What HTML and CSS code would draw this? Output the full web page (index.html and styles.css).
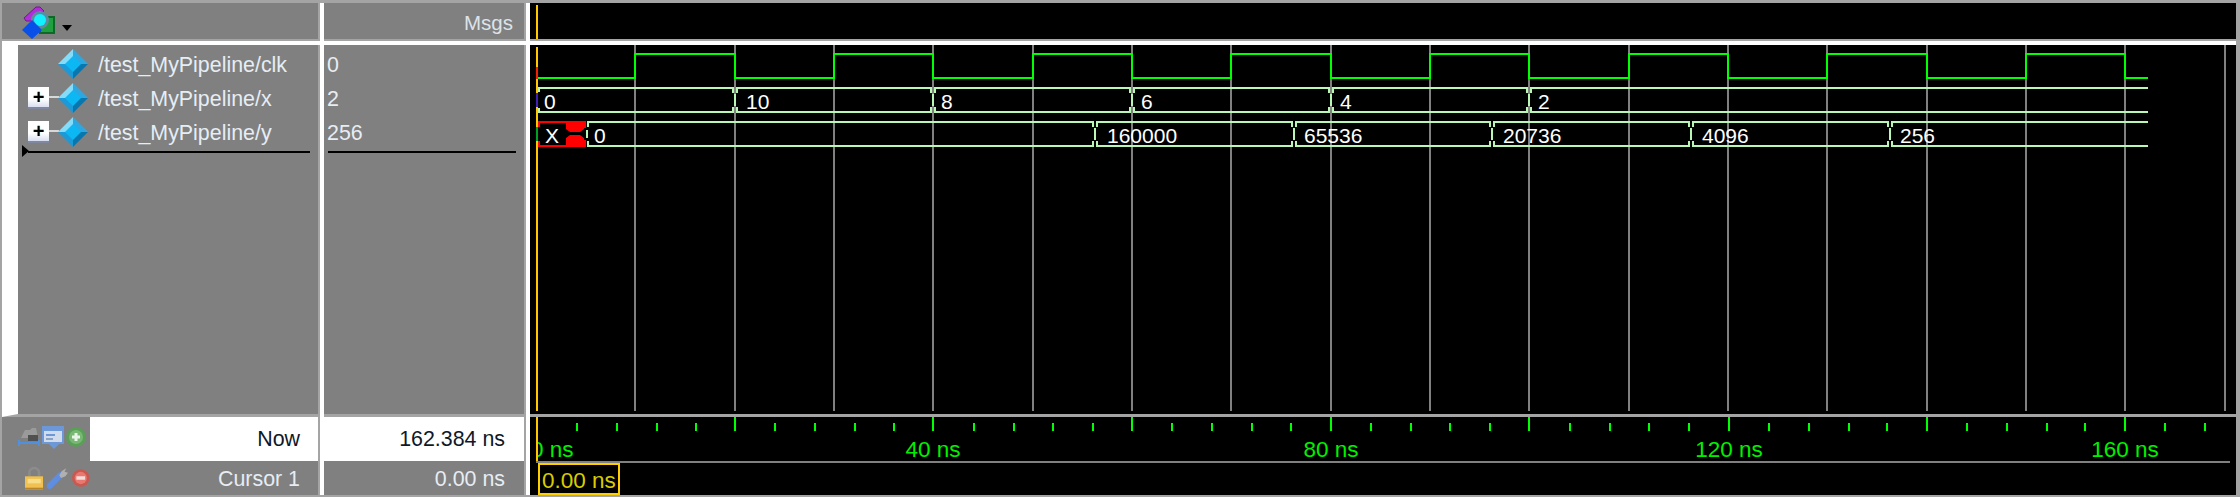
FILE: index.html
```html
<!DOCTYPE html>
<html lang="en">

<head>
    <meta charset="UTF-8">
    <title>Wave</title>
    <link rel="stylesheet" href="styles.css">
</head>

<body>
    <svg class="defs" width="0" height="0">
        <symbol id="diamond" viewBox="0 0 30 30">
            <polygon points="0,15 15,0 15,15" fill="#86dcf8"/>
            <polygon points="15,0 30,15 15,15" fill="#2aa8e4"/>
            <polygon points="0,15 15,30 15,15" fill="#1a9ad8"/>
            <polygon points="30,15 15,30 15,15" fill="#0a76ae"/>
            <polygon points="15,7 23,15 15,23 7,15" fill="#0cb8f4"/>
        </symbol>
        <symbol id="edge" viewBox="-4 -13 8 26" overflow="visible">
            <path d="M-2 -13V-7M2 -13V-7M-2 13V7M2 13V7M0 -6V6" fill="none" stroke="#b8f8b4" stroke-width="2"/>
        </symbol>
    </svg>

    <div class="app">
        <!-- top row -->
        <div class="head names-head">
            <svg class="logo" width="34" height="36" viewBox="0 0 34 36">
                <path d="M2 15L14 4H18L22 8L10 18H4Z" fill="#b030d8" stroke="#701890"/>
                <rect x="18" y="14" width="14" height="16" fill="#20a040" stroke="#106828" stroke-width="2"/>
                <circle cx="18" cy="17" r="9" fill="#5c8ca0"/>
                <circle cx="18" cy="17" r="6" fill="#10f0ff"/>
                <polygon points="10,17 20,27 10,36 0,27" fill="#0850e8"/>
            </svg>
            <span class="caret"></span>
        </div>
        <div class="head msgs-head">Msgs</div>
        <div class="head wave-head"><div class="cursor-mark"></div></div>

        <!-- signals -->
        <div class="pane names">
            <div class="sig">
                <span class="slot"></span>
                <svg class="dia" width="30" height="30"><use href="#diamond"/></svg>
                <span class="sig-name">/test_MyPipeline/clk</span>
            </div>
            <div class="sig">
                <span class="slot"><span class="plus"></span></span>
                <svg class="dia" width="30" height="30"><use href="#diamond"/></svg>
                <span class="sig-name">/test_MyPipeline/x</span>
            </div>
            <div class="sig">
                <span class="slot"><span class="plus"></span></span>
                <svg class="dia" width="30" height="30"><use href="#diamond"/></svg>
                <span class="sig-name">/test_MyPipeline/y</span>
            </div>
            <div class="endline"><span class="marker"></span></div>
        </div>
        <div class="pane values">
            <div class="val">0</div>
            <div class="val">2</div>
            <div class="val">256</div>
            <div class="endline"></div>
        </div>
        <div class="pane waves">
            <svg class="wave-svg" width="1706" height="366" viewBox="530 45 1706 366">
                <path class="grid" d="M635 45V411M735 45V411M834 45V411M933 45V411M1033 45V411M1132 45V411M1231 45V411M1331 45V411M1430 45V411M1529 45V411M1629 45V411M1728 45V411M1827 45V411M1927 45V411M2026 45V411M2125 45V411M2225 45V411"/>

                <rect x="536" y="47" width="2" height="364" fill="#ffc800"/>
                <rect x="536" y="67" width="2" height="12" fill="#f02000"/>
                <rect x="536" y="93" width="2" height="14" fill="#4020b0"/>
                <rect x="536" y="127" width="2" height="14" fill="#00a020"/>

                <path class="clk" d="M538 78H635V54H735V78H834V54H933V78H1033V54H1132V78H1231V54H1331V78H1430V54H1529V78H1629V54H1728V78H1827V54H1927V78H2026V54H2125V78H2148"/>

                <path class="bus" d="M539 92V88H733M737 88H931M935 88H1130M1134 88H1329M1333 88H1527M1531 88H2148M539 108V112H733M737 112H931M935 112H1130M1134 112H1329M1333 112H1527M1531 112H2148"/>
                <use href="#edge" x="731" y="87" width="8" height="26"/>
                <use href="#edge" x="929" y="87" width="8" height="26"/>
                <use href="#edge" x="1128" y="87" width="8" height="26"/>
                <use href="#edge" x="1327" y="87" width="8" height="26"/>
                <use href="#edge" x="1525" y="87" width="8" height="26"/>

                <path class="unknown" d="M538 122H585V128M538 146H585V140M539 122V127M539 146V141"/>
                <path d="M566 121H584V129L580 132H570L566 129ZM570 135H580L584 138V147H566V138Z" fill="#ff0000"/>

                <path class="bus" d="M588 127V122H1093M1097 122H1292M1296 122H1490M1494 122H1689M1693 122H1888M1892 122H2148M588 141V146H1093M1097 146H1292M1296 146H1490M1494 146H1689M1693 146H1888M1892 146H2148M587 130V138"/>
                <use href="#edge" x="1091" y="121" width="8" height="26"/>
                <use href="#edge" x="1290" y="121" width="8" height="26"/>
                <use href="#edge" x="1488" y="121" width="8" height="26"/>
                <use href="#edge" x="1687" y="121" width="8" height="26"/>
                <use href="#edge" x="1886" y="121" width="8" height="26"/>

                <text x="544" y="109">0</text>
                <text x="746" y="109">10</text>
                <text x="941" y="109">8</text>
                <text x="1141" y="109">6</text>
                <text x="1340" y="109">4</text>
                <text x="1538" y="109">2</text>
                <text x="545" y="143">X</text>
                <text x="594" y="143">0</text>
                <text x="1107" y="143">160000</text>
                <text x="1304" y="143">65536</text>
                <text x="1503" y="143">20736</text>
                <text x="1702" y="143">4096</text>
                <text x="1900" y="143">256</text>
            </svg>
        </div>

        <!-- now row -->
        <div class="now-name">
            <div class="tools">
                <svg width="22" height="20" viewBox="0 0 22 20">
                    <path d="M3 11L7 3H12L14 1H18L20 11Z" fill="#9a9a9a"/>
                    <rect x="10" y="8" width="10" height="6" fill="#505050"/>
                    <path d="M1 16H21M1 13V19M21 13V19" fill="none" stroke="#5090e0" stroke-width="2"/>
                </svg>
                <svg width="22" height="23" viewBox="0 0 22 23">
                    <rect x="0" y="0" width="22" height="18" fill="#6c98d8"/>
                    <rect x="2" y="5" width="18" height="11" fill="#d0dcec"/>
                    <rect x="4" y="8" width="9" height="2" fill="#6c98d8"/>
                    <rect x="4" y="12" width="7" height="2" fill="#8aa4c8"/>
                    <polygon points="7,18 17,18 12,23" fill="#6c98d8"/>
                </svg>
                <svg width="20" height="20" viewBox="0 0 20 20">
                    <circle cx="10" cy="10" r="10" fill="#5a9e58"/>
                    <circle cx="10" cy="10" r="7" fill="#78b874"/>
                    <path d="M10 6V14M6 10H14" stroke="#e8f4e8" stroke-width="3"/>
                </svg>
            </div>
            <div class="now-label">Now</div>
        </div>
        <div class="now-val">162.384 ns</div>

        <div class="wave-foot">
            <svg class="wave-svg" width="1706" height="78" viewBox="530 417 1706 78">
                <path class="tick" d="M735 417V431M933 417V431M1132 417V431M1331 417V431M1529 417V431M1729 417V431M1927 417V431M2125 417V431"/>
                <path class="tick" d="M577 423V431M617 423V431M657 423V431M696 423V431M775 423V431M815 423V431M855 423V431M894 423V431M974 423V431M1014 423V431M1053 423V431M1093 423V431M1172 423V431M1212 423V431M1252 423V431M1291 423V431M1371 423V431M1411 423V431M1450 423V431M1490 423V431M1570 423V431M1610 423V431M1649 423V431M1689 423V431M1769 423V431M1809 423V431M1849 423V431M1887 423V431M1967 423V431M2007 423V431M2047 423V431M2085 423V431M2165 423V431M2205 423V431"/>
                <text class="ruler" x="531" y="457">0 ns</text>
                <rect x="530" y="440" width="6" height="20" fill="black"/>
                <text class="ruler mid" x="933" y="457">40 ns</text>
                <text class="ruler mid" x="1331" y="457">80 ns</text>
                <text class="ruler mid" x="1729" y="457">120 ns</text>
                <text class="ruler mid" x="2125" y="457">160 ns</text>
                <rect x="536" y="417" width="2" height="44" fill="#ffc800"/>
                <rect x="536" y="461" width="1694" height="2" fill="#808080"/>
                <rect x="539" y="464" width="80" height="30" class="curbox"/>
                <text class="curtxt" x="542" y="488">0.00 ns</text>
            </svg>
        </div>

        <!-- cursor row -->
        <div class="cur-name">
            <div class="tools tools-cur">
                <svg width="21" height="25" viewBox="0 0 21 25">
                    <path d="M5 10V6A5 5 0 0 1 16 6V10" fill="none" stroke="#8c8c8c" stroke-width="3"/>
                    <rect x="0" y="10" width="21" height="15" fill="#f0c050"/>
                    <rect x="3" y="13" width="15" height="5" fill="#f8dc88"/>
                    <rect x="0" y="23" width="21" height="2" fill="#b88428"/>
                </svg>
                <svg width="24" height="24" viewBox="0 0 24 24">
                    <path d="M3 21L15 9" stroke="#5f8ee0" stroke-width="7" stroke-linecap="round"/>
                    <path d="M14 9L17 4L22 1L20 5L24 6L21 10L16 12Z" fill="#b0b0b0"/>
                </svg>
                <svg width="20" height="20" viewBox="0 0 20 20">
                    <circle cx="10" cy="10" r="10" fill="#c85850"/>
                    <circle cx="10" cy="10" r="7" fill="#e87870"/>
                    <rect x="5" y="8" width="10" height="4" fill="#f4dcd8"/>
                </svg>
            </div>
            <div class="cur-label">Cursor 1</div>
        </div>
        <div class="cur-val">0.00 ns</div>
    </div>
</body>

</html>
```

FILE: styles.css
```css
html, body {
    margin: 0;
    padding: 0;
}

body {
    width: 2240px;
    height: 497px;
    overflow: hidden;
    font-family: "Liberation Sans", Arial, sans-serif;
    font-size: 21.4px;
}

.defs {
    position: absolute;
}

.app {
    box-sizing: border-box;
    width: 2240px;
    height: 497px;
    display: grid;
    grid-template-columns: 318px 202px 1706px;
    grid-template-rows: 42px 372px 44px 34px;
    column-gap: 4px;
    background-color: white;
    border-top: 3px solid #a4a4a4;
    border-left: 2px solid #a4a4a4;
    border-right: 4px solid #a4a4a4;
    border-bottom: 2px solid #a4a4a4;
}

.head {
    height: 36px;
    background-color: #808080;
    border-bottom: 2px solid #a4a4a4;
}

.names-head {
    display: flex;
    align-items: flex-start;
    border-right: 2px solid #a4a4a4;
}

.logo {
    margin-left: 20px;
}

.caret {
    width: 0;
    height: 0;
    margin-left: 6px;
    margin-top: 22px;
    border-left: 5px solid transparent;
    border-right: 5px solid transparent;
    border-top: 6px solid black;
}

.msgs-head {
    text-align: right;
    padding-right: 11px;
    line-height: 40px;
    font-size: 20.5px;
    color: #dde3e8;
    border-right: 2px solid #a4a4a4;
}

.wave-head {
    background-color: black;
    padding-top: 2px;
    height: 34px;
}

.cursor-mark {
    width: 2px;
    height: 34px;
    margin-left: 6px;
    background-color: #ffc800;
}

.pane {
    height: 369px;
    border-bottom: 3px solid #a4a4a4;
}

.names {
    background-color: #808080;
    border-left: 16px solid white;
    border-right: 2px solid #a4a4a4;
    padding-top: 2px;
    height: 367px;
}

.values {
    background-color: #808080;
    border-right: 2px solid #a4a4a4;
    padding-top: 2px;
    height: 367px;
}

.waves {
    background-color: black;
}

.wave-svg {
    display: block;
    overflow: hidden;
}

.sig {
    display: flex;
    align-items: center;
    height: 34px;
    padding-left: 10px;
}

.slot {
    display: flex;
    align-items: center;
    width: 30px;
    height: 34px;
}

.plus {
    position: relative;
    width: 21px;
    height: 20px;
    background: linear-gradient(#ffffff 60%, #d8def0);
    border-bottom: 2px solid #8088a0;
}

/* plus sign and the little line to the diamond */
.plus::before {
    content: "+";
    position: absolute;
    left: 0;
    width: 21px;
    top: -1px;
    text-align: center;
    font-size: 20px;
    font-weight: bold;
    line-height: 22px;
    color: black;
}

.plus::after {
    content: "";
    position: absolute;
    left: 21px;
    top: 9px;
    width: 10px;
    height: 2px;
    background-color: #d8d8d8;
}

.dia {
    display: block;
    position: relative;
}

.sig-name {
    margin-left: 10px;
    padding-top: 3px;
    color: #e6edf4;
    white-space: nowrap;
}

.endline {
    position: relative;
    height: 2px;
    margin: 2px 8px 0 10px;
    background-color: black;
}

.values .endline {
    margin: 2px 8px 0 4px;
}

.marker {
    position: absolute;
    left: -6px;
    top: -6px;
    width: 0;
    height: 0;
    border-top: 6px solid transparent;
    border-bottom: 6px solid transparent;
    border-left: 7px solid black;
}

.val {
    height: 34px;
    line-height: 37px;
    padding-left: 3px;
    color: #e6edf4;
}

.grid {
    fill: none;
    stroke: #808080;
    stroke-width: 2;
}

.clk {
    fill: none;
    stroke: #00ff00;
    stroke-width: 2;
}

.bus {
    fill: none;
    stroke: #b8f8b4;
    stroke-width: 2;
}

.unknown {
    fill: none;
    stroke: #ff0000;
    stroke-width: 2;
}

.wave-svg text {
    font-family: "Liberation Sans", Arial, sans-serif;
    font-size: 21px;
    fill: white;
}

.wave-svg .ruler {
    fill: #00f000;
    font-size: 22.5px;
}

.wave-svg .mid {
    text-anchor: middle;
}

.wave-svg .curtxt {
    fill: #d8cc00;
    font-size: 22.5px;
}

.tick {
    fill: none;
    stroke: #00ff00;
    stroke-width: 2;
}

.curbox {
    fill: none;
    stroke: #ffd000;
    stroke-width: 2;
}

.now-name {
    display: flex;
    background-color: white;
    height: 44px;
    border-right: 2px solid #a4a4a4;
}

.tools {
    display: flex;
    align-items: center;
    gap: 2px;
    box-sizing: border-box;
    width: 88px;
    padding-left: 16px;
    padding-bottom: 4px;
    background-color: #808080;
    filter: blur(0.6px);
}

.tools-cur {
    padding-left: 23px;
    padding-bottom: 0;
    gap: 4px;
    background-color: transparent;
}

.now-label {
    flex: 1;
    text-align: right;
    padding-right: 18px;
    line-height: 44px;
    color: #101828;
}

.now-val {
    background-color: white;
    height: 44px;
    line-height: 44px;
    text-align: right;
    padding-right: 19px;
    color: #101828;
    border-right: 2px solid #a4a4a4;
}

.wave-foot {
    grid-column: 3;
    grid-row: 3 / span 2;
    background-color: black;
}

.cur-name {
    display: flex;
    background-color: #808080;
    border-right: 2px solid #a4a4a4;
}

.cur-label {
    flex: 1;
    text-align: right;
    padding-right: 18px;
    line-height: 36px;
    color: #e6edf4;
}

.cur-val {
    background-color: #808080;
    text-align: right;
    padding-right: 19px;
    line-height: 36px;
    color: #e6edf4;
    border-right: 2px solid #a4a4a4;
}
```
